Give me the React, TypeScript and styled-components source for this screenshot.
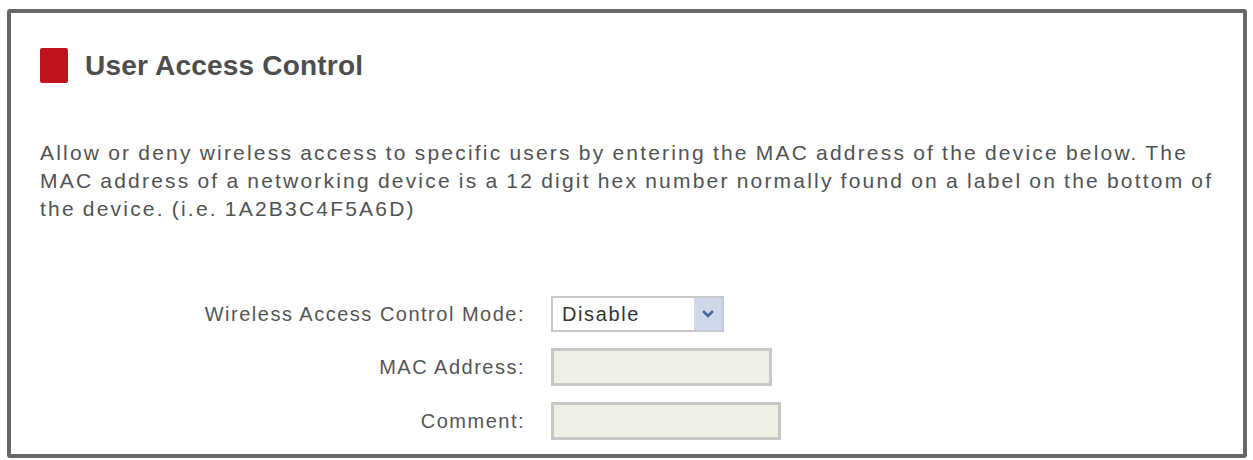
import * as React from "react";
import styled, { createGlobalStyle } from "styled-components";

const GlobalStyle = createGlobalStyle`
  html, body {
    margin: 0;
    padding: 0;
    background: #ffffff;
  }
  body {
    font-family: "Liberation Sans", Arial, sans-serif;
  }
`;

const Frame = styled.div`
  box-sizing: border-box;
  margin: 9px 6px 0 7px;
  height: 449px;
  border: 4px solid #676767;
  border-radius: 3px;
  background: #ffffff;
  padding: 35px 0 0 29px;
  overflow: hidden;
`;

const Header = styled.div`
  display: flex;
  align-items: center;
  gap: 17px;
`;

const Marker = styled.div`
  width: 28px;
  height: 35px;
  background: #c0131d;
  border-radius: 2px;
`;

const Title = styled.h1`
  margin: 0;
  font-size: 28px;
  font-weight: bold;
  color: #4d4d4d;
  letter-spacing: 0.2px;
`;

const Intro = styled.p`
  margin: 56px 0 0 0;
  font-size: 21px;
  line-height: 28px;
  color: #525252;
  letter-spacing: 2.2px;
  word-spacing: -1px;
`;

const Form = styled.div`
  display: grid;
  grid-template-columns: 485px auto;
  column-gap: 26px;
  row-gap: 16px;
  align-items: center;
  margin-top: 73px;
`;

const Label = styled.label`
  text-align: right;
  font-size: 20px;
  color: #555555;
  letter-spacing: 1.5px;
`;

const SelectBox = styled.div`
  display: flex;
  align-items: stretch;
  width: 173px;
  height: 36px;
  box-sizing: border-box;
  border: 2px solid #c4c7cc;
  background: #ffffff;
`;

const SelectValue = styled.span`
  flex: 1;
  display: flex;
  align-items: center;
  padding-left: 9px;
  font-size: 20px;
  color: #333333;
  letter-spacing: 1.6px;
`;

const SelectArrow = styled.span`
  width: 28px;
  display: flex;
  align-items: center;
  justify-content: center;
  background: #cfd8e8;
`;

const Field = styled.div<{ width: number }>`
  width: ${({ width }) => width}px;
  height: 38px;
  box-sizing: border-box;
  border: 3px solid #c6c8c6;
  background: #efefe6;
`;

export default function App() {
  return (
    <>
      <GlobalStyle />
      <Frame>
        <Header>
          <Marker />
          <Title>User Access Control</Title>
        </Header>
        <Intro>
          Allow or deny wireless access to specific users by entering the MAC address of the device below. The
          <br />
          MAC address of a networking device is a 12 digit hex number normally found on a label on the bottom of
          <br />
          the device. (i.e. 1A2B3C4F5A6D)
        </Intro>
        <Form>
          <Label>Wireless Access Control Mode:</Label>
          <SelectBox>
            <SelectValue>Disable</SelectValue>
            <SelectArrow>
              <svg width="14" height="10" viewBox="0 0 14 10">
                <path d="M2 2 L7 7 L12 2" fill="none" stroke="#45669c" strokeWidth="2.6" />
              </svg>
            </SelectArrow>
          </SelectBox>
          <Label>MAC Address:</Label>
          <Field width={221} />
          <Label>Comment:</Label>
          <Field width={230} />
        </Form>
      </Frame>
    </>
  );
}
